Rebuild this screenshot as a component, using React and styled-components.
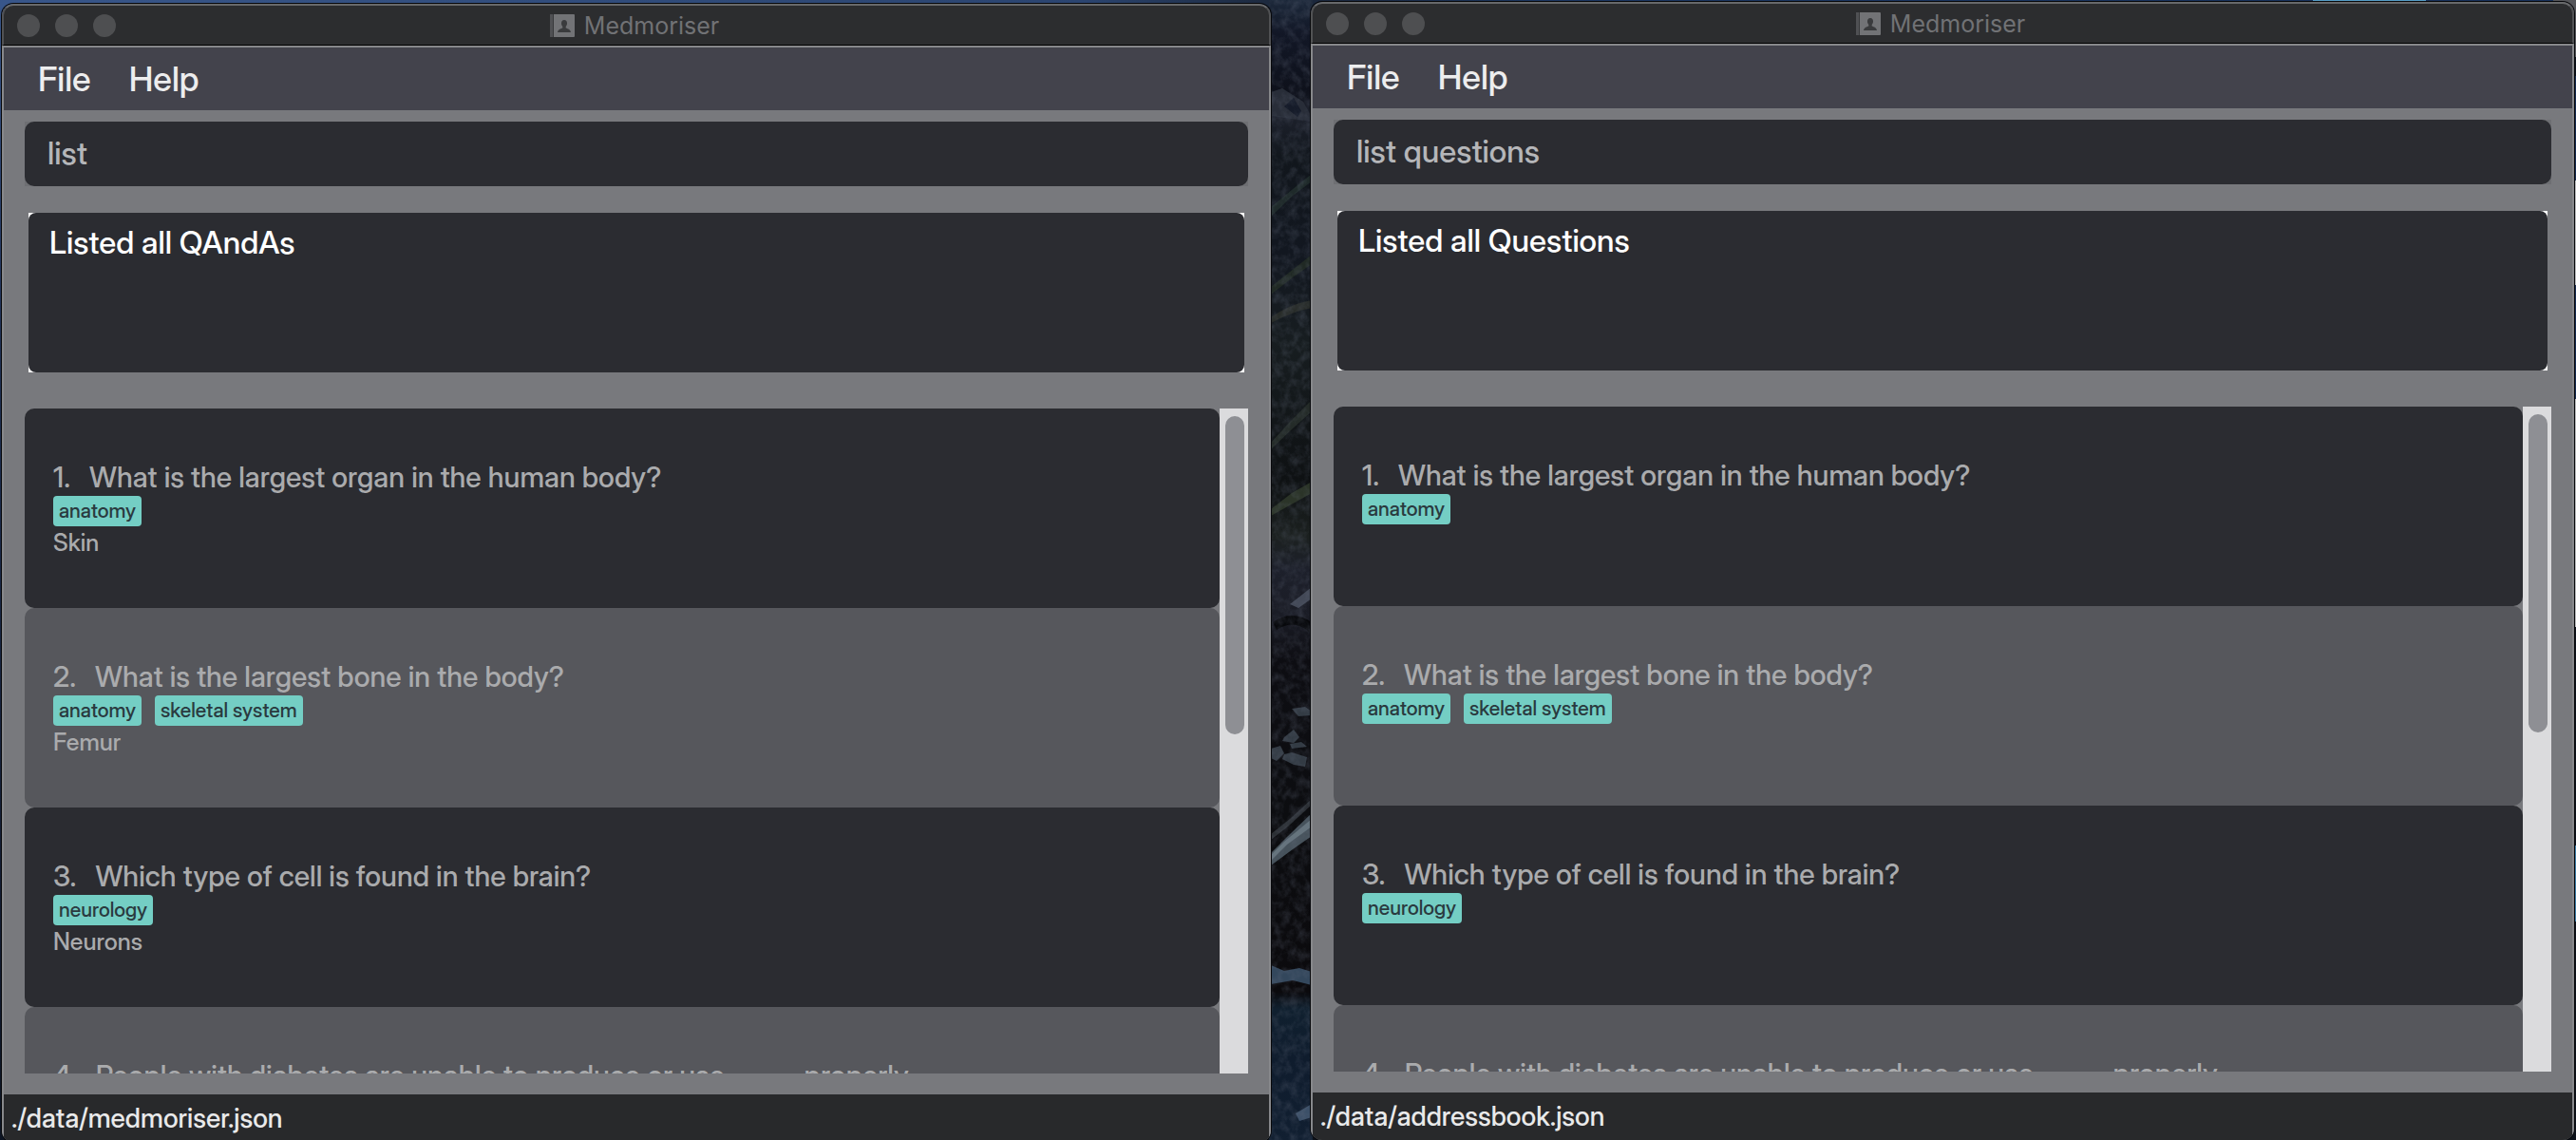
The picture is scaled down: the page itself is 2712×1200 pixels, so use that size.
import React from 'react';
import styled, { createGlobalStyle } from 'styled-components';

const GlobalStyle = createGlobalStyle`
  *, *::before, *::after { box-sizing: border-box; }
  body {
    margin: 0;
    background: #0d121b;
    font-family: "Inter Display", Inter, "Liberation Sans", sans-serif;
    font-weight: 500;
  }
`;

const Desktop = styled.main`
  position: relative;
  display: flex;
  align-items: flex-start;
  gap: 42px;
  height: 100vh;
  padding: 0 2px;
  overflow: hidden;
`;

const Wallpaper = styled.svg`
  position: absolute;
  inset: 0;
  width: 100%;
  height: 100%;
`;

const Window = styled.section`
  position: relative;
  display: flex;
  flex-direction: column;
  flex: ${(p) => p.$grow} 1 0;
  min-width: 0;
  height: calc(100vh - 2px);
  margin-top: ${(p) => p.$top}px;
  border-radius: 12px;
  overflow: hidden;
  box-shadow: 0 0 0 1px #07080b;
`;

const TitleBar = styled.header`
  display: grid;
  grid-template-columns: 1fr auto 1fr;
  align-items: center;
  flex: none;
  height: 44px;
  padding-right: 4px;
  border: 2px solid #515254;
  border-top-color: #68696b;
  border-bottom: 1px solid #000;
  border-radius: 12px 12px 0 0;
  background: #2c2d2f;
`;

const Lights = styled.div`
  display: flex;
  gap: 16px;
  padding-left: 14px;
`;

const Light = styled.button`
  width: 24px;
  height: 24px;
  padding: 0;
  border: 0;
  border-radius: 50%;
  background: #4e4f51;
`;

const Title = styled.h1`
  display: flex;
  align-items: center;
  gap: 10px;
  margin: 0;
  font: 400 25px/40px Inter, "Liberation Sans", sans-serif;
  color: #717275;
`;

const Frame = styled.div`
  display: flex;
  flex-direction: column;
  flex: 1;
  min-height: 0;
  border: solid #87888b;
  border-width: 2px 2px 0;
  background: #78797d;
`;

const MenuBar = styled.nav`
  display: flex;
  flex: none;
  height: 66px;
  padding-left: 16px;
  background: #43434c;
`;

const MenuButton = styled.button`
  padding: 0 20px;
  border: 0;
  background: none;
  font: 500 36px/66px "Inter Display", Inter, sans-serif;
  color: #ededee;
`;

const Content = styled.div`
  display: flex;
  flex-direction: column;
  flex: 1;
  min-height: 0;
  padding: 12px 22px 22px;
`;

const CommandBox = styled.div`
  display: flex;
  flex: none;
  height: 68px;
  margin-bottom: 28px;
  background: #6e6f73;
`;

const CommandInput = styled.input`
  flex: 1;
  min-width: 0;
  padding: 0 24px 2px;
  border: 0;
  border-radius: 10px;
  outline: 0;
  background: #2b2c31;
  font: 500 33px/40px "Inter Display", Inter, sans-serif;
  color: #b5b6b9;
`;

const ResultBox = styled.div`
  display: flex;
  flex: none;
  height: 168px;
  margin: 0 4px 38px;
  background: #fff;
`;

const ResultText = styled.textarea`
  flex: 1;
  min-width: 0;
  padding: 11px 22px;
  border: 0;
  border-radius: 8px;
  outline: 0;
  resize: none;
  background: #2b2c31;
  font: 500 33px/40px "Inter Display", Inter, sans-serif;
  color: #fff;
`;

const ListArea = styled.div`
  display: flex;
  flex: 1;
  min-height: 0;
`;

const CardList = styled.ol`
  flex: 1;
  min-width: 0;
  margin: 0;
  padding: 0;
  list-style: none;
  overflow: hidden;
`;

const Card = styled.li`
  height: 210px;
  padding: 53px 30px 0;
  border-radius: 10px;
  background: #2b2c31;
  color: #aaabad;

  &:nth-child(even) { background: #56575c; }
`;

const Question = styled.h2`
  display: flex;
  gap: 20px;
  margin: 0 0 1px;
  font-weight: 500;
  font-size: 30px;
  line-height: 38px;
  white-space: nowrap;
`;

const Tags = styled.div`
  display: flex;
  gap: 14px;
`;

const Tag = styled.span`
  height: 32px;
  padding: 0 6px;
  border-radius: 4px;
  background: #74cec4;
  font-size: 21px;
  line-height: 32px;
  color: #2a3a3f;
`;

const Answer = styled.p`
  margin: 0;
  font-size: 25px;
  line-height: 34px;
`;

const Track = styled.div`
  flex: none;
  width: 30px;
  padding: 8px 4px 8px 6px;
  background: #dbdbdd;
`;

const Thumb = styled.div`
  height: 49%;
  border-radius: 10px;
  background: #8e8f94;
`;

const StatusBar = styled.footer`
  flex: none;
  height: 50px;
  padding-left: 8px;
  background: #28292b;
  font-size: 28px;
  line-height: 50px;
  color: #e9e9ea;
`;

const cards = [
  { question: 'What is the largest organ in the human body?', tags: ['anatomy'], answer: 'Skin' },
  { question: 'What is the largest bone in the body?', tags: ['anatomy', 'skeletal system'], answer: 'Femur' },
  { question: 'Which type of cell is found in the brain?', tags: ['neurology'], answer: 'Neurons' },
  { question: 'People with diabetes are unable to produce or use _____ properly.', tags: [] },
];

function BookIcon() {
  return (
    <svg width="26" height="24" viewBox="0 0 26 24" aria-hidden="true">
      <rect width="26" height="24" rx="1" fill="#727376" />
      <rect width="4" height="24" fill="#505154" />
      <rect x="3" width="1" height="24" fill="#38393b" />
      <path
        d="M15 6c2 0 3 1.400 3 3.500 0 1.700-.6 2.600-1.300 3.500v1.400c2.400.9 4.800 1.400 5.300 4.600H8c.5-3.200 2.900-3.700 5.300-4.600V13c-.7-.9-1.300-1.800-1.300-3.500C12 7.400 13 6 15 6z"
        fill="#3a3b3d"
      />
    </svg>
  );
}

function Coast() {
  return (
    <Wallpaper viewBox="0 0 2712 1200" preserveAspectRatio="none" aria-hidden="true">
      <defs>
        <linearGradient id="sky" x1="0" x2="1" y1="0" y2="0">
          <stop offset="0" stopColor="#38568a" />
          <stop offset=".42" stopColor="#2b4470" />
          <stop offset=".5" stopColor="#1b2638" />
          <stop offset=".6" stopColor="#1c3762" />
          <stop offset="1" stopColor="#17305a" />
        </linearGradient>
        <linearGradient id="edge" x1="0" x2="0" y1="0" y2="1">
          <stop offset="0" stopColor="#38568a" />
          <stop offset=".3" stopColor="#1f3054" />
          <stop offset="1" stopColor="#0d1524" />
        </linearGradient>
        <linearGradient id="cliff" x1="0" x2="0" y1="0" y2="1">
          <stop offset="0" stopColor="#1c283a" />
          <stop offset=".03" stopColor="#121726" />
          <stop offset=".08" stopColor="#0e111b" />
          <stop offset=".1" stopColor="#1d212c" />
          <stop offset=".14" stopColor="#11161c" />
          <stop offset=".22" stopColor="#121720" />
          <stop offset=".3" stopColor="#171d20" />
          <stop offset=".42" stopColor="#0e1113" />
          <stop offset=".47" stopColor="#1b201f" />
          <stop offset=".5" stopColor="#1d202b" />
          <stop offset=".54" stopColor="#1a1c25" />
          <stop offset=".58" stopColor="#0d0d12" />
          <stop offset=".72" stopColor="#0c0d10" />
          <stop offset=".87" stopColor="#0b0a0d" />
          <stop offset=".885" stopColor="#10202f" />
          <stop offset=".93" stopColor="#0f1c2d" />
          <stop offset="1" stopColor="#111f31" />
        </linearGradient>
        <filter id="rock" x="0" y="0" width="1" height="1" colorInterpolationFilters="sRGB">
          <feTurbulence type="fractalNoise" baseFrequency=".12 .1" numOctaves="4" seed="7" />
          <feColorMatrix values="0 0 0 0 .4  0 0 0 0 .43  0 0 0 0 .5  1.600 0 0 0 -.6" />
        </filter>
      </defs>
      <rect width="2712" height="1200" fill="#0d121b" />
      <rect width="4" height="1200" fill="url(#edge)" />
      <rect width="2712" height="8" fill="url(#sky)" />
      <rect x="2435" width="119" height="2" fill="#559dc6" />
      <rect x="2688" width="24" height="60" fill="#55565a" />
      <rect x="2711" y="80" width="1" height="110" fill="#152b50" />
      <rect x="2711" y="190" width="1" height="110" fill="#b9babb" />
      <rect x="2711" y="300" width="1" height="120" fill="#152b50" />
      <rect x="2711" y="420" width="1" height="240" fill="#b9babb" />
      <rect x="2711" y="890" width="1" height="80" fill="#3c7ea6" />
      <rect x="1336" width="46" height="1200" fill="url(#cliff)" />
      <path d="M1338 97l12-4 22 14 9 16v5l-43-6z" fill="#282d38" />
      <path d="M1352 112l10-9 8 14-4 6z" fill="#151b29" />
      <path d="M1338 218l28-23 15-12v8l-20 15-23 22z" fill="#1f2a2a" />
      <path d="M1338 302l43-34v10l-20 14-23 18z" fill="#202924" />
      <path d="M1338 334q20-14 43-18v8q-20 4-43 16z" fill="#272b28" />
      <path d="M1338 466l20-22 23-23v12l-20 18-23 22z" fill="#242b28" />
      <path d="M1338 536l22-17 21-12v12l-43 24z" fill="#2b3428" />
      <path d="M1358 636l23-18v12l-14 10z" fill="#434957" />
      <path d="M1340 655q20-14 41 0l-3 10q-16-14-34-2z" fill="#07080b" />
      <path d="M1352 776l10-8 6 8-6 6-12-2zM1358 783l12-2 6 5-16 2zM1338 788l10-3 4 8-8 8-6-3zM1352 794l8-2 16 5-2 10-12-2-12-6zM1360 746l14-2 7 5v4l-14 1z" fill="#333b44" />
      <path d="M1338 878l20-16 23-21v6l-25 23-18 14z" fill="#2b2f34" />
      <path d="M1338 898l18-18 25-24v24l-20 14-23 17z" fill="#46525b" />
      <path d="M1338 900l14-14 29-24v8l-26 19-17 17z" fill="#66757e" />
      <path d="M1338 1016l14 6 16-3 13 4v14l-20-5-23 4z" fill="#33475c" />
      <path d="M1364 1172l17-10v14l-13 4z" fill="#3c5068" />
      <rect x="1336" width="46" height="1200" filter="url(#rock)" opacity=".35" />
    </Wallpaper>
  );
}

function AppWindow({ grow, top, id, command, result, file, showAnswers }) {
  return (
    <Window $grow={grow} $top={top}>
      <TitleBar>
        <Lights>
          <Light type="button" aria-label="Close" />
          <Light type="button" aria-label="Minimise" />
          <Light type="button" aria-label="Zoom" />
        </Lights>
        <Title>
          <BookIcon />
          Medmoriser
        </Title>
      </TitleBar>
      <Frame>
        <MenuBar>
          <MenuButton type="button">File</MenuButton>
          <MenuButton type="button">Help</MenuButton>
        </MenuBar>
        <Content>
          <CommandBox>
            <CommandInput id={`${id}-command`} aria-label="Command" defaultValue={command} />
          </CommandBox>
          <ResultBox>
            <ResultText id={`${id}-result`} aria-label="Result" readOnly value={result} />
          </ResultBox>
          <ListArea>
            <CardList>
              {cards.map((card, i) => (
                <Card key={card.question}>
                  <Question>
                    <span>{i + 1}.</span>
                    <span>{card.question}</span>
                  </Question>
                  <Tags>
                    {card.tags.map((tag) => (
                      <Tag key={tag}>{tag}</Tag>
                    ))}
                  </Tags>
                  {showAnswers && card.answer && <Answer>{card.answer}</Answer>}
                </Card>
              ))}
            </CardList>
            <Track>
              <Thumb />
            </Track>
          </ListArea>
        </Content>
        <StatusBar>{file}</StatusBar>
      </Frame>
    </Window>
  );
}

export default function App() {
  return (
    <>
      <GlobalStyle />
      <Desktop>
        <Coast />
        <AppWindow grow={1336} top={4} id="all" command="list" result="Listed all QAndAs" file="./data/medmoriser.json" showAnswers />
        <AppWindow grow={1330} top={2} id="questions" command="list questions" result="Listed all Questions" file="./data/addressbook.json" />
      </Desktop>
    </>
  );
}
